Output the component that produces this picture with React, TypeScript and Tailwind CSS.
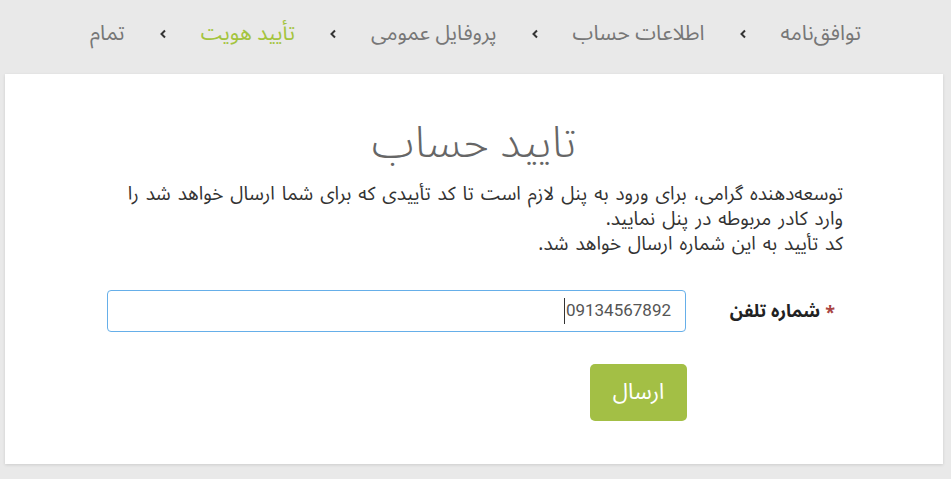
import React from "react";

const FA = '"Noto Sans Arabic", "DejaVu Sans", sans-serif';

function Chevron() {
  return (
    <span className="mx-[34px] inline-flex items-center">
      <svg width="8" height="10" viewBox="0 0 8 10">
        <path d="M6 1.5 L2.5 5 L6 8.5" fill="none" stroke="#333" strokeWidth="2" />
      </svg>
    </span>
  );
}

export default function App() {
  const steps = ["توافق‌نامه", "اطلاعات حساب", "پروفایل عمومی", "تأیید هویت", "تمام"];
  return (
    <div dir="rtl" className="w-[951px] h-[479px] bg-[#e9e9e9] flex flex-col" style={{ fontFamily: FA }}>
      <div className="h-[74px] flex items-center justify-center pb-[6px]">
        {steps.map((s, i) => (
          <React.Fragment key={s}>
            <span className={"text-[21px] " + (i === 3 ? "text-[#a4c43e]" : "text-[#777]")}>{s}</span>
            {i < steps.length - 1 && <Chevron />}
          </React.Fragment>
        ))}
      </div>
      <div className="ml-[5px] mr-[8px] h-[390px] bg-white shadow-[0_1px_3px_rgba(0,0,0,0.12)] flex flex-col">
        <h1 className="text-center text-[44px] font-light text-[#666] mt-[43px] leading-[52px]">تایید حساب</h1>
        <p className="mt-[13px] mr-[100px] ml-[110px] text-[19px] leading-[25px] text-[#333] [word-spacing:2px] whitespace-nowrap">
          توسعه‌دهنده گرامی، برای ورود به پنل لازم است تا کد تأییدی که برای شما ارسال خواهد شد را
          <br />
          وارد کادر مربوطه در پنل نمایید.
          <br />
          کد تأیید به این شماره ارسال خواهد شد.
        </p>
        <div className="flex items-center mt-[33px] pr-[108px]">
          <label className="w-[149px] shrink-0 flex items-center whitespace-nowrap text-[18px] font-bold text-[#222]">
            <span className="text-[#a94442] ml-[5px] mt-[4px]">*</span>
            شماره تلفن
          </label>
          <div className="w-[579px] shrink-0 h-[42px] border border-[#66afe9] rounded-[4px] flex items-center justify-start pr-[14px]">
            <span dir="ltr" className="flex items-center">
              <span className="w-px h-[26px] bg-[#333]"></span>
              <span className="text-[17px] text-[#555] pl-[1px]" style={{ fontFamily: "Roboto, sans-serif" }}>09134567892</span>
            </span>
          </div>
        </div>
        <div className="flex mt-[32px] mr-[256px]">
          <button className="w-[97px] h-[57px] rounded-[5px] bg-[#a3bf45] text-white text-[22px]">ارسال</button>
        </div>
      </div>
    </div>
  );
}
